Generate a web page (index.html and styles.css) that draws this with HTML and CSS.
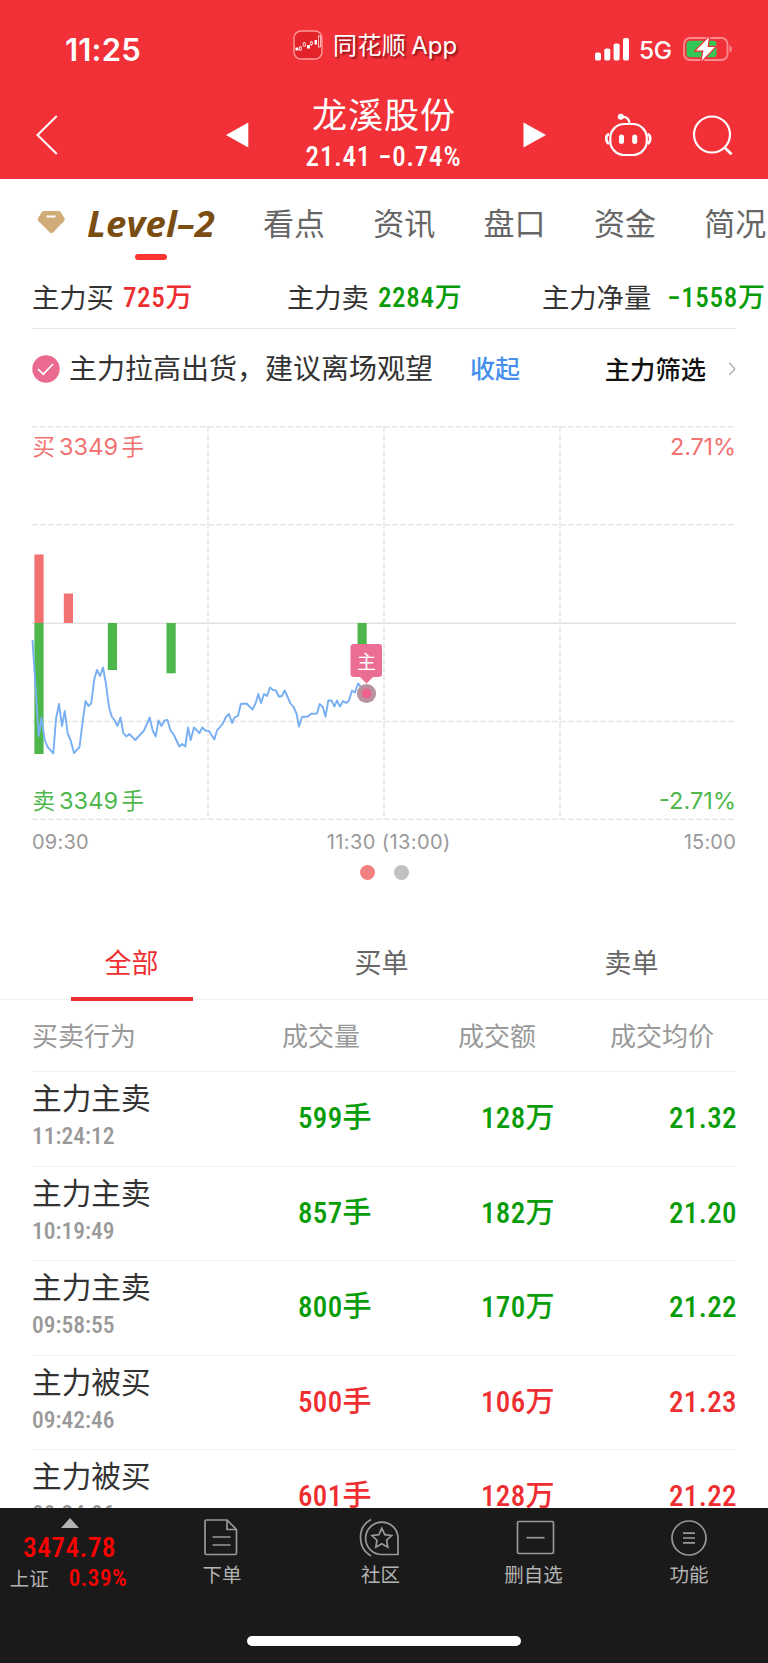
FILE: index.html
```html
<!DOCTYPE html>
<html lang="zh-CN">
<head>
<meta charset="utf-8">
<title>龙溪股份</title>
<link rel="stylesheet" href="styles.css">
</head>
<body>
<header class="header">
  <div class="status">
    <span class="clock">11:25</span>
    <div class="brand">
      <svg class="brand-icon" width="30" height="30" viewBox="0 0 30 30">
        <rect x="1" y="1" width="28" height="28" rx="7" fill="#e4222a" stroke="#ff9a9c" stroke-width="1.4"/>
        <g fill="#fff"><rect x="2.500" y="17.500" width="3" height="3"/><rect x="14" y="15" width="3" height="3.500"/><rect x="21.500" y="10" width="2.500" height="4.500"/></g>
        <g fill="none" stroke="#fff" stroke-width=".7"><path d="M7.500 16v5M11.300 12v4.500M18.500 11v5"/><rect x="6.400" y="17" width="2.200" height="3" fill="#e4222a"/><rect x="10.200" y="13" width="2.200" height="3" fill="#e4222a"/><rect x="17.400" y="12" width="2.200" height="2.500" fill="#e4222a"/><rect x="25.400" y="6" width="2.200" height="11"/></g>
      </svg>
      <span class="brand-name">同花顺<span class="brand-app">App</span></span>
    </div>
    <div class="signals">
      <svg width="35" height="23" viewBox="0 0 35 23" fill="#fff"><rect x="0" y="14.500" width="6" height="8" rx="1.800"/><rect x="9.300" y="10.500" width="6" height="12" rx="1.800"/><rect x="18.600" y="5.500" width="6" height="17" rx="1.800"/><rect x="28" y="0" width="6" height="22.500" rx="1.800"/></svg>
      <span class="network">5G</span>
      <svg width="50" height="26" viewBox="0 0 50 26"><rect x="1" y="2" width="43.500" height="22" rx="6" fill="none" stroke="#f98b8f" stroke-width="1.800"/><path d="M46.500 9v8q2.500-1.500 2.500-4t-2.500-4z" fill="#f98b8f"/><rect x="3.500" y="4.800" width="30" height="16.500" rx="3.500" fill="#33c758"/><path d="M26 1L13 14.500h7.500L18.500 25 32 11h-7.500z" fill="#fff" stroke="#f23038" stroke-width="2.400" paint-order="stroke"/></svg>
    </div>
  </div>
  <nav class="nav">
    <svg width="24" height="42" viewBox="0 0 24 42" fill="none" stroke="#fff" stroke-width="2"><path d="M20.800 2L1.500 21l19.300 19"/></svg>
    <svg width="24" height="26" viewBox="0 0 24 26"><path d="M0 13L22.300.500v25z" fill="#fff"/></svg>
    <div class="stock">
      <h1 class="stock-name">龙溪股份</h1>
      <p class="stock-price">21.41 −0.74%</p>
    </div>
    <svg width="24" height="26" viewBox="0 0 24 26"><path d="M23 13L.500.500v25z" fill="#fff"/></svg>
    <svg width="46" height="44" viewBox="0 0 46 44" fill="none" stroke="#fff" stroke-width="2.200"><rect x="5.300" y="11" width="36.500" height="31" rx="14"/><path d="M17 4q7-.500 7.500 6.500"/><circle cx="15.800" cy="3.700" r="3" fill="#fff" stroke="none"/><path d="M4 21q-3 1-2.700 5 .2 3.500 2.700 5M42.500 21q3 1 2.700 5-.2 3.500-2.700 5" stroke-width="2.600"/><path d="M16.500 24v4.500M29.700 24v4.500" stroke-width="5" stroke-linecap="round"/></svg>
    <svg width="42" height="42" viewBox="0 0 42 42" fill="none" stroke="#fff" stroke-width="2.200"><circle cx="19" cy="20.500" r="18"/><path d="M31 33l7.500 7.300" stroke-width="2.800"/></svg>
  </nav>
</header>

<main class="main">
  <nav class="tabs">
    <svg class="gem" width="28" height="24" viewBox="0 0 28 24"><path d="M7 1h15q1 0 1.500.800l4 6.500q.800 1.500-.400 2.800l-11 11.300q-1.600 1.600-3.200 0L1.300 11.100Q.300 10 1 8.300l4-6.500Q5.600 1 7 1z" fill="#d0ad78"/><path d="M9.500 6.500h9" stroke="#fff" stroke-width="2"/></svg>
    <div class="tab-level"><span>Level–2</span><i></i></div>
    <span class="tab">看点</span><span class="tab">资讯</span><span class="tab">盘口</span><span class="tab">资金</span><span class="tab">简况</span>
  </nav>

  <section class="stats">
    <div><span>主力买</span><b class="up">725万</b></div>
    <div><span>主力卖</span><b class="down">2284万</b></div>
    <div><span>主力净量</span><b class="down net">−1558万</b></div>
  </section>

  <section class="advice">
    <svg width="28" height="28" viewBox="0 0 28 28"><circle cx="14" cy="14" r="13.700" fill="#ea6a90"/><path d="M6 14.200l5.300 5L21 9" fill="none" stroke="#fff" stroke-width="1.700"/></svg>
    <p class="advice-text">主力拉高出货，建议离场观望</p>
    <a class="fold">收起</a>
    <a class="filter">主力筛选</a>
    <svg width="8" height="16" viewBox="0 0 8 16" fill="none" stroke="#aaa" stroke-width="1.300"><path d="M1.300 1.800L6.800 8l-5.500 6"/></svg>
  </section>

  <section class="chart">
    <svg class="plot" width="704" height="395" viewBox="32 426 704 395">
      <g stroke="#e6e6e6" stroke-width="1.500" stroke-dasharray="6 2">
        <path d="M32 426.800H736M32 524.800H736M32 721.500H736M32 819.300H736M208 426V819M384 426V819M560 426V819"/>
      </g>
      <path d="M32 623.200H736" stroke="#e3e3e3" stroke-width="1.500"/>
      <g fill="#f27171"><rect x="34.400" y="554.500" width="9.200" height="68.500"/><rect x="63.800" y="593.500" width="9.200" height="29.500"/></g>
      <g fill="#4eb74b"><rect x="34.400" y="623" width="9.200" height="131"/><rect x="107.800" y="623" width="9.200" height="47"/><rect x="166.500" y="623" width="9.200" height="50.300"/><rect x="357.500" y="623" width="9.200" height="24"/></g>
      <polyline fill="none" stroke="#78aff3" stroke-width="1.900" stroke-linejoin="round" points="32.500,640 38.700,736 41.500,717.500 44.500,739 47.300,746.500 53.300,753.300 56,719 59,704 62,726 64.800,711 67.700,733.500 70.500,740 74,753 79.500,747 82.500,723 85.500,701 88.500,706 91.300,703 94.300,679 97,670 100,676 103,667.500 106,684 109,707 111.700,716.500 114.500,720 117.500,726 120.500,717.500 123.300,733 126.300,736.500 129.300,734 135.300,740 144,730.500 149.700,717.500 152.700,730.500 155.700,736.500 158.500,720.500 161.500,726 164.500,720.500 167.500,720 170.500,730.500 173.700,734.500 179.300,746.500 182,744 185.300,746.500 188,727.500 190.700,740 194,727.500 199.500,733 202.300,727.500 205.500,730.500 209,731 214.300,739.500 217,730.500 222.500,724 226,717 229,714 232,723 234.500,717.500 238,716 240.800,704 246.500,703.500 252.500,709.500 255.500,703.500 258.300,694 261,703 264,694 267,696 270,687.500 273,690 276,690.500 278.800,696.500 282,696 284.700,690.500 290.500,703.500 293.500,707 296.500,713.500 299,726.500 302,717 308,716.500 311,713.800 317,713.500 319.700,704 322.700,707 325.500,716.500 328.300,700.500 331.500,700.500 334.500,706.500 337,700.500 340,706.500 343,701 346,703 349,700.500 352,690.500 355,692.500 358,683.500 362,688 366.500,693.500"/>
      <path d="M354 644h25q3 0 3 3v27q0 3-3 3h-6l-6.500 6.500-6.500-6.500h-6q-3.500 0-3.500-3v-27q0-3 3.500-3z" fill="#eb6d93"/>
      <text x="366.500" y="668.500" class="flag-text" text-anchor="middle">主</text>
      <circle cx="366.500" cy="693.500" r="9.600" fill="#b8929f"/><circle cx="366.500" cy="693.500" r="4.900" fill="#ed638d"/>
      <text y="454.500" class="vol up-soft"><tspan x="32.500" class="unit">买</tspan><tspan x="59" textLength="59">3349</tspan><tspan x="121.500" class="unit">手</tspan></text>
      <text x="736" y="454.500" class="vol up-soft" text-anchor="end" textLength="66">2.71%</text>
      <text y="808.700" class="vol down-soft"><tspan x="32.500" class="unit">卖</tspan><tspan x="59" textLength="59">3349</tspan><tspan x="121.500" class="unit">手</tspan></text>
      <text x="736" y="808.700" class="vol down-soft" text-anchor="end" textLength="77">-2.71%</text>
    </svg>
    <div class="axis"><span>09:30</span><span class="noon">11:30 (13:00)</span><span>15:00</span></div>
    <div class="dots"><i class="dot active"></i><i class="dot"></i></div>
  </section>

  <nav class="orders"><span class="order active">全部</span><span class="order">买单</span><span class="order">卖单</span></nav>

  <section class="table">
    <div class="row head"><span>买卖行为</span><span>成交量</span><span>成交额</span><span>成交均价</span></div>
    <div class="row down"><div class="act"><p>主力主卖</p><time>11:24:12</time></div><b>599手</b><b>128万</b><b>21.32</b></div>
    <div class="row down"><div class="act"><p>主力主卖</p><time>10:19:49</time></div><b>857手</b><b>182万</b><b>21.20</b></div>
    <div class="row down"><div class="act"><p>主力主卖</p><time>09:58:55</time></div><b>800手</b><b>170万</b><b>21.22</b></div>
    <div class="row up"><div class="act"><p>主力被买</p><time>09:42:46</time></div><b>500手</b><b>106万</b><b>21.23</b></div>
    <div class="row up"><div class="act"><p>主力被买</p><time>09:34:06</time></div><b>601手</b><b>128万</b><b>21.22</b></div>
  </section>
</main>

<footer class="footer">
  <div class="toolbar">
    <div class="index">
      <svg width="18" height="10" viewBox="0 0 18 10"><path d="M9 0l9 10H0z" fill="#b3b3b3"/></svg>
      <strong>3474.78</strong>
      <p><span>上证</span><em>0.39%</em></p>
    </div>
    <div class="tool">
      <svg width="36" height="40" viewBox="1 0 36 40"><path d="M3.500 2H24l9.500 9.500V35q0 1.500-1.500 1.500H3.500Q2 36.500 2 35V3.500Q2 2 3.500 2zM24 2v9.500h9.500M9.500 19h18M9.500 27h18"/></svg>
      <span>下单</span>
    </div>
    <div class="tool">
      <svg width="42" height="40" viewBox="2 0 42 40"><path d="M40 36.500H24A16.200 16.200 0 1 1 40 20.500zM13 1.500C-1 9-1 30 13 38M23.800 10.300l3 6.300 6.800.900-5 4.700 1.200 7-6-3.400-6 3.400 1.200-7-5-4.700 6.800-.900z"/></svg>
      <span>社区</span>
    </div>
    <div class="tool">
      <svg width="40" height="40" viewBox="-1.500 0 40 40"><rect x="2" y="3.500" width="36" height="32" rx="1.500"/><path d="M11 19.700h18"/></svg>
      <span>删自选</span>
    </div>
    <div class="tool">
      <svg width="40" height="40" viewBox="0 0 40 40"><circle cx="20" cy="20" r="17"/><path d="M14 15.200h12M14 20h12M14 24.800h12"/></svg>
      <span>功能</span>
    </div>
  </div>
  <div class="home"></div>
</footer>
</body>
</html>
```
FILE: styles.css
```css
* { box-sizing: border-box; margin: 0; padding: 0; }
body {
  display: flex;
  flex-direction: column;
  width: 768px;
  height: 1663px;
  overflow: hidden;
  background: #fff;
  color: #333;
  font-family: Inter, "Noto Sans CJK SC", sans-serif;
}
svg { display: block; flex: none; overflow: visible; }
b, strong { font-weight: 500; }
em, i { font-style: normal; }
span, b, a, p, h1 { white-space: nowrap; }

.up { color: #ee2e31; }
.down { color: #089c08; }

/* header */
.header { flex: none; height: 179px; background: #f23038; color: #fff; }
.status { display: grid; grid-template-columns: 293px 302px 1fr; height: 90px; padding-top: 4px; }
.clock { padding-left: 65px; font-size: 31px; font-weight: 600; line-height: 91px; letter-spacing: .2px; }
.brand { display: flex; align-items: center; gap: 10px; height: 82px; }
.brand-name { margin-top: -4px; font-size: 24px; font-weight: 400; letter-spacing: .4px; text-shadow: 2px 2px 2px rgba(70, 0, 0, .6); }
.brand-app { margin-left: 5px; letter-spacing: 0; }
.signals { display: flex; align-items: center; height: 90px; }
.network { margin: 1px 12px 0 9px; font-size: 24.500px; font-weight: 500; letter-spacing: -.5px; }
.nav {
  display: grid;
  grid-template-columns: 190px 22px 275px 82px 88px 1fr;
  align-items: center;
  height: 89px;
  padding-left: 36px;
}
.stock { padding-right: 4px; text-align: center; }
.stock-name { height: 44px; font-size: 35px; font-weight: 400; line-height: 40px; letter-spacing: 1px; margin-right: -1px; }
.stock-price { height: 36px; font: 500 27px/37px "Roboto Condensed", Roboto, sans-serif; font-stretch: 82%; letter-spacing: .8px; }

/* section tabs */
.tabs { display: flex; height: 89px; padding: 11px 0 0 37px; overflow: hidden; }
.gem { margin-top: 20px; }
.tab-level { display: flex; flex: none; flex-direction: column; align-items: center; width: 134px; margin: 0 45px 0 19px; }
.tab-level span { color: #7a4d12; font: italic 700 36.500px/66px "Open Sans", sans-serif; letter-spacing: .2px; }
.tab-level i { width: 32px; height: 6px; margin-top: -2px; border-radius: 3px; background: #fb3430; }
.tab { flex: none; width: 110.300px; color: #666; font-size: 31px; line-height: 67px; }

/* totals */
.stats {
  display: grid;
  grid-template-columns: 255px 255px 1fr;
  height: 61px;
  margin: 0 32px;
  border-bottom: 1px solid #e9e9e9;
}
.stats div { display: flex; gap: 9px; font-size: 27.300px; line-height: 62px; }
.stats b { font-family: "Roboto Condensed", Roboto, "Noto Sans CJK SC", sans-serif; font-stretch: 82%; font-size: 27px; line-height: 61px; letter-spacing: .7px; }
.stats .net { margin-left: 7px; }

/* advice */
.advice { display: flex; align-items: center; height: 80px; padding: 0 32px; margin-bottom: 17px; }
.advice-text { margin: -4px 0 0 9px; font-size: 28px; }
.fold { margin: -4px 0 0 37px; color: #468fee; font-size: 25px; font-weight: 500; }
.filter { margin: -3px 22px 0 auto; color: #111; font-size: 25.300px; font-weight: 500; }

/* chart */
.chart { padding: 0 32px; }
.plot { width: 704px; height: 395px; }
.vol { font-size: 23.500px; }
.unit { font-size: 22.500px; }
.flag-text { font-size: 19px; fill: #fff; }
.up-soft { fill: #f27171; }
.down-soft { fill: #4eb74b; }
.axis { display: flex; justify-content: space-between; height: 42px; color: #999; font-size: 20px; line-height: 42px; letter-spacing: .2px; }
.noon { padding-left: 5px; letter-spacing: .4px; }
.dots { display: flex; justify-content: center; gap: 19px; height: 18px; padding-top: 2px; }
.dot { width: 15px; height: 15px; border-radius: 50%; background: #c1c1c1; }
.dot.active { background: #f38080; }

/* order filter */
.orders { display: flex; gap: 128px; height: 75px; margin-top: 44px; padding-left: 71px; border-bottom: 1px solid #f1f1f1; }
.order { width: 121px; margin-right: 1px; height: 76px; color: #666; font-size: 27px; line-height: 77px; text-align: center; }
.order.active { width: 122px; margin: 0 0 -1px; padding-right: 1px; border-bottom: 4px solid #ee2e31; color: #ee2e31; }

/* trades */
.row { display: grid; grid-template-columns: 190px 150px 183px 182px; height: 94.500px; margin: 0 32px; border-bottom: 1px solid #f1f1f1; }
.row.head { grid-template-columns: 250px 176px 152px 1fr; height: 72px; color: #999; font-size: 26px; line-height: 73px; }
.row b { font-family: "Roboto Condensed", Roboto, "Noto Sans CJK SC", sans-serif; font-stretch: 82%; font-size: 29px; line-height: 92px; letter-spacing: .4px; text-align: right; }
.act { padding-top: 6px; }
.act p { color: #333; font-size: 29.700px; line-height: 40px; }
.act time { display: block; margin-top: 3px; color: #999; font: 500 23.500px/30px "Roboto Condensed", Roboto, sans-serif; font-stretch: 82%; letter-spacing: 0; }
.main { flex: none; height: 1329px; overflow: hidden; }

/* bottom bar */
.footer { flex: none; height: 155px; background: #1a1a1a; color: #b3b3b3; }
.toolbar { display: grid; grid-template-columns: 143px 158px 159px 147px 164px; height: 128px; padding-top: 10px; }
.index { display: flex; flex-direction: column; align-items: center; padding-right: 4px; }
.index strong { height: 39px; color: #f00; font: 500 27.500px/40px "Roboto Condensed", Roboto, sans-serif; font-stretch: 82%; letter-spacing: .4px; }
.index p { display: flex; gap: 20px; height: 28px; margin-left: -2px; font-size: 19.500px; line-height: 25px; }
.index em { color: #f00; font: 500 23px/24px "Roboto Condensed", Roboto, sans-serif; font-stretch: 82%; letter-spacing: .6px; }
.tool { display: flex; flex-direction: column; align-items: center; font-size: 19.500px; line-height: 34px; }
.tool svg { fill: none; stroke: #999; stroke-width: 1.700; }
.home { width: 274px; height: 10px; margin: 0 auto; border-radius: 5px; background: #fff; }
```
